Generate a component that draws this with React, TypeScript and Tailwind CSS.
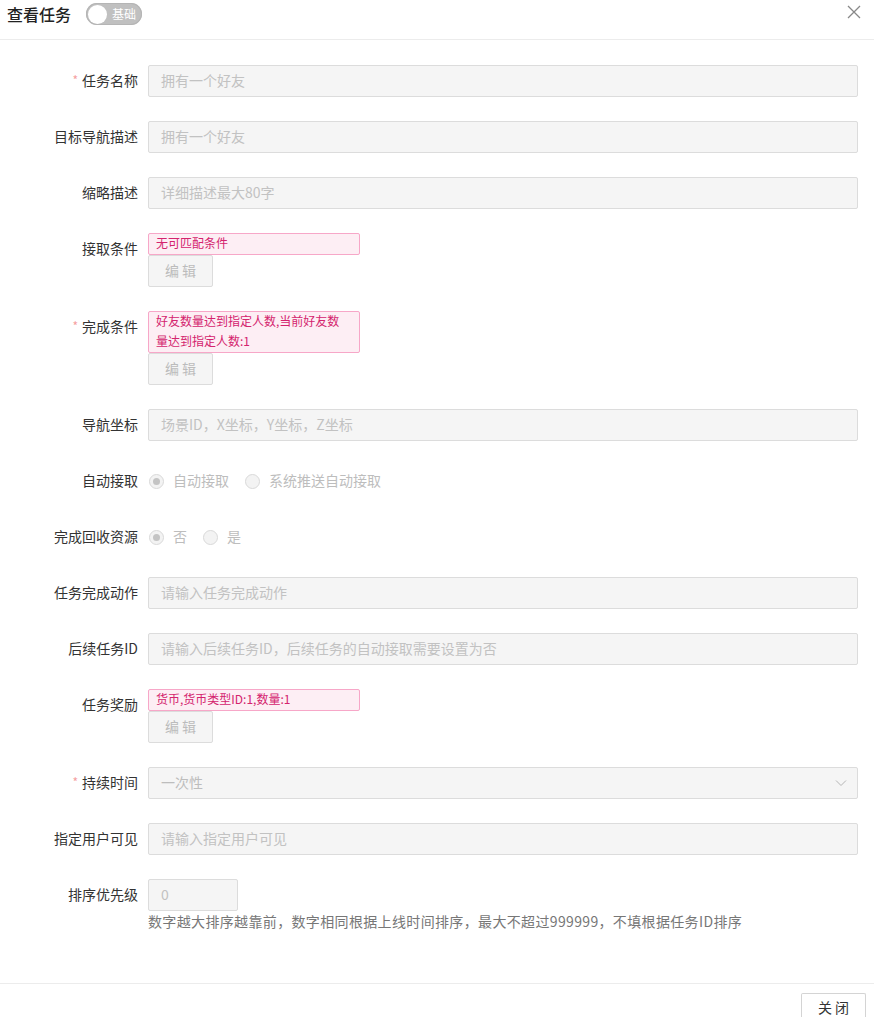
import React from 'react';

const font = { fontFamily: '"Noto Sans CJK SC", "Noto Sans", sans-serif' };

const Label: React.FC<{ text: string; required?: boolean }> = ({ text, required }) => (
  <div className="w-[148px] shrink-0 h-8 flex items-center justify-end pr-[10px] pb-[2px] text-sm text-[#333]">
    {required && <span className="text-[#f5a0a0] mr-1 text-xs">*</span>}
    {text}
  </div>
);

const Input: React.FC<{ placeholder: string; className?: string }> = ({ placeholder, className }) => (
  <div
    className={`h-8 border border-[#dcdcdc] bg-[#f5f5f5] rounded-[2px] px-3 pb-[2px] flex items-center text-sm text-[#c2c2c2] ${className ?? 'flex-1'}`}
  >
    {placeholder}
  </div>
);

const TagBlock: React.FC<{ lines: string[] }> = ({ lines }) => (
  <div className="flex flex-col items-start">
    <div className="w-[212px] border border-[#f7a7c8] bg-[#fdeef4] rounded-[2px] px-[7px] text-xs leading-[20px] text-[#d4246e]">
      {lines.map((l) => (
        <div key={l} className="-mt-[1px] pb-[1px]">{l}</div>
      ))}
    </div>
    <div className="w-[65px] h-8 border border-[#dcdcdc] bg-[#f5f5f5] rounded-[2px] pb-[2px] flex items-center justify-center text-sm text-[#bcbcbc]">
      编 辑
    </div>
  </div>
);

const Radio: React.FC<{ label: string; checked?: boolean }> = ({ label, checked }) => (
  <div className="flex items-center mr-4">
    <span className="w-[15px] h-[15px] rounded-full border border-[#d9d9d9] bg-[#f3f3f3] flex items-center justify-center">
      {checked && <span className="w-[7px] h-[7px] rounded-full bg-[#c4c4c4]" />}
    </span>
    <span className="ml-[9px] pb-[2px] text-sm text-[#bdbdbd]">{label}</span>
  </div>
);

const Row: React.FC<{ label: string; required?: boolean; children: React.ReactNode }> = ({ label, required, children }) => (
  <div className="flex items-start mb-6 pr-4">
    <Label text={label} required={required} />
    <div className="flex-1 flex">{children}</div>
  </div>
);

export default function App() {
  return (
    <div className="w-[874px] h-[1017px] bg-white flex flex-col overflow-hidden" style={font}>
      {/* Header */}
      <div className="h-10 shrink-0 border-b border-[#ececec] flex items-start justify-between pl-[7px] pr-3">
        <div className="flex items-center pt-[2px]">
          <span className="text-base font-medium text-[#222] mr-[15px]">查看任务</span>
          <div className="w-[56px] h-[22px] rounded-full bg-[#c0c0c0] flex items-center pl-[2px] shadow-[inset_0_0_0_1px_#b5b5b5]">
            <span className="w-[19px] h-[19px] rounded-full bg-white" />
            <span className="ml-[5px] text-xs text-white">基础</span>
          </div>
        </div>
        <svg width="14" height="14" viewBox="0 0 14 14" className="mt-[5px] mr-[1px]">
          <path d="M1 1 L13 13 M13 1 L1 13" stroke="#888" strokeWidth="1.3" fill="none" />
        </svg>
      </div>

      {/* Body */}
      <div className="flex-1 pt-[25px]">
        <Row label="任务名称" required>
          <Input placeholder="拥有一个好友" />
        </Row>
        <Row label="目标导航描述">
          <Input placeholder="拥有一个好友" />
        </Row>
        <Row label="缩略描述">
          <Input placeholder="详细描述最大80字" />
        </Row>
        <Row label="接取条件">
          <TagBlock lines={['无可匹配条件']} />
        </Row>
        <Row label="完成条件" required>
          <TagBlock lines={['好友数量达到指定人数,当前好友数', '量达到指定人数:1']} />
        </Row>
        <Row label="导航坐标">
          <Input placeholder="场景ID，X坐标，Y坐标，Z坐标" />
        </Row>
        <Row label="自动接取">
          <div className="h-8 flex items-center pl-[1px]">
            <Radio label="自动接取" checked />
            <Radio label="系统推送自动接取" />
          </div>
        </Row>
        <Row label="完成回收资源">
          <div className="h-8 flex items-center pl-[1px]">
            <Radio label="否" checked />
            <Radio label="是" />
          </div>
        </Row>
        <Row label="任务完成动作">
          <Input placeholder="请输入任务完成动作" />
        </Row>
        <Row label="后续任务ID">
          <Input placeholder="请输入后续任务ID，后续任务的自动接取需要设置为否" />
        </Row>
        <Row label="任务奖励">
          <TagBlock lines={['货币,货币类型ID:1,数量:1']} />
        </Row>
        <Row label="持续时间" required>
          <div className="flex-1 h-8 border border-[#dcdcdc] bg-[#f5f5f5] rounded-[2px] pl-3 pr-[10px] flex items-center justify-between text-sm text-[#bdbdbd]">
            <span className="pb-[2px]">一次性</span>
            <svg width="12" height="8" viewBox="0 0 12 8">
              <path d="M1 1.5 L6 6.5 L11 1.5" stroke="#b5b5b5" strokeWidth="1" fill="none" />
            </svg>
          </div>
        </Row>
        <Row label="指定用户可见">
          <Input placeholder="请输入指定用户可见" />
        </Row>
        <Row label="排序优先级">
          <div className="flex flex-col">
            <Input placeholder="0" className="w-[90px]" />
            <div className="text-sm leading-[20px] tracking-[0.35px] text-[#777]">
              数字越大排序越靠前，数字相同根据上线时间排序，最大不超过999999，不填根据任务ID排序
            </div>
          </div>
        </Row>
      </div>

      {/* Footer */}
      <div className="h-[34px] shrink-0 border-t border-[#ececec] flex justify-end items-start pt-[9px] pr-2">
        <div className="w-[65px] h-[24px] border-t border-x border-[#d4d4d4] rounded-t-[2px] bg-white flex items-end justify-center text-sm leading-[20px] text-[#333]">
          关 闭
        </div>
      </div>
    </div>
  );
}
